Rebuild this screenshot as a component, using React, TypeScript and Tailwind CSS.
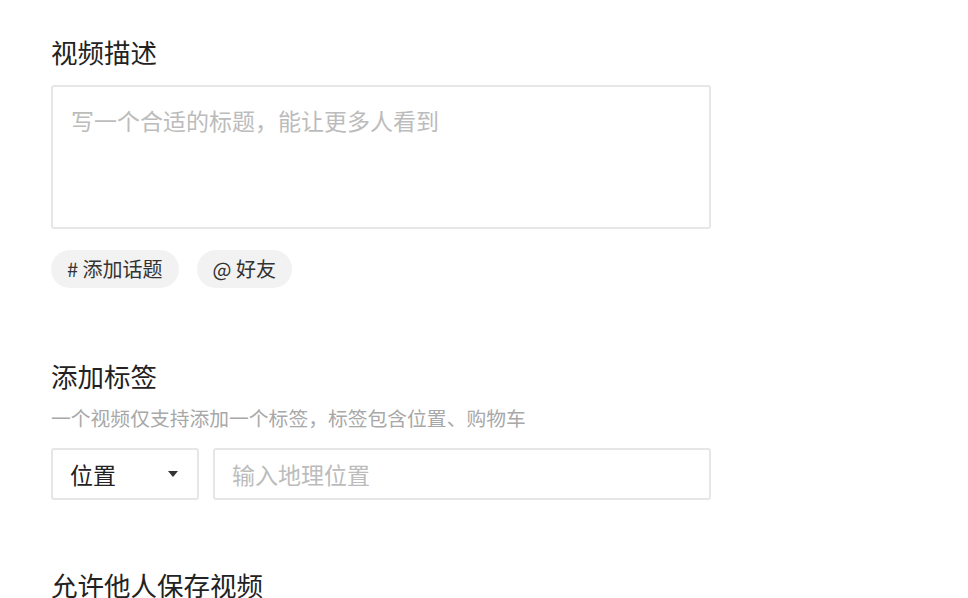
import React from "react";

export default function App() {
  return (
    <div
      className="min-h-[598px] w-[968px] bg-white text-[#222]"
      style={{ fontFamily: '"Noto Sans CJK SC", "Noto Sans", sans-serif' }}
    >
      <div className="flex w-[711px] flex-col pl-[51px] pt-[34px]">
        <h2 className="text-[26.5px] leading-[36px] text-[#222]">视频描述</h2>
        <div className="mt-[15px] h-[144px] w-[660px] rounded-[3px] border-2 border-[#e6e6e6] px-[18px] pt-[17px]">
          <div className="text-[23px] leading-[32px] text-[#bcbcbc]">
            写一个合适的标题，能让更多人看到
          </div>
        </div>
        <div className="mt-[21px] flex gap-[18px]">
          <span className="flex h-[38px] items-center rounded-full bg-[#f2f2f2] px-[16px] text-[20px] text-[#333]">
            # 添加话题
          </span>
          <span className="flex h-[38px] items-center rounded-full bg-[#f2f2f2] px-[16px] text-[20px] text-[#333]">
            @ 好友
          </span>
        </div>

        <h2 className="mt-[70px] text-[26.5px] leading-[36px] text-[#222]">添加标签</h2>
        <p className="mt-[10px] text-[19.8px] leading-[28px] text-[#a8a8a8]">
          一个视频仅支持添加一个标签，标签包含位置、购物车
        </p>
        <div className="mt-[16px] flex gap-[14px]">
          <div className="flex h-[52px] w-[148px] items-center justify-between rounded-[3px] border-2 border-[#e6e6e6] pl-[17px] pr-[19px]">
            <span className="text-[23px] text-[#222]">位置</span>
            <svg width="10" height="6" viewBox="0 0 10 6">
              <path d="M0 0 L10 0 L5 6 Z" fill="#333" />
            </svg>
          </div>
          <div className="flex h-[52px] flex-1 items-center rounded-[3px] border-2 border-[#e6e6e6] pl-[17px]">
            <span className="text-[23px] text-[#bcbcbc]">输入地理位置</span>
          </div>
        </div>

        <h2 className="mt-[67px] text-[26.5px] leading-[36px] text-[#222]">允许他人保存视频</h2>
      </div>
    </div>
  );
}
